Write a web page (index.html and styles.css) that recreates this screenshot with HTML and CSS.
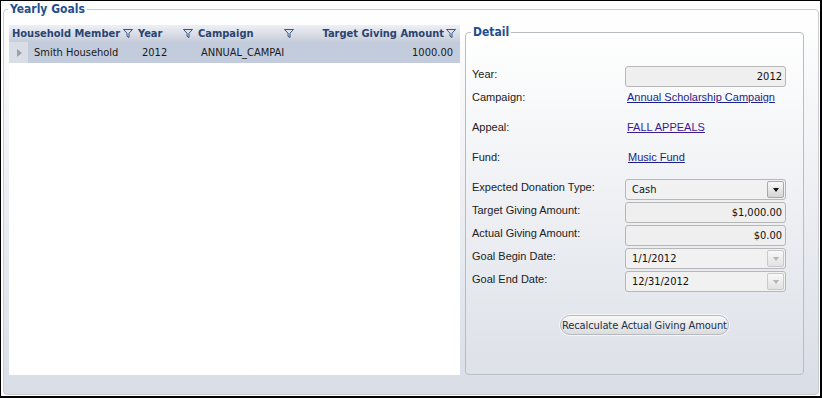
FILE: index.html
```html
<!DOCTYPE html>
<html lang="en">
<head>
    <meta charset="UTF-8">
    <title>Yearly Goals</title>
    <link rel="stylesheet" href="styles.css">
</head>
<body>

    <div class="frame">
        <fieldset class="goals">
            <legend>Yearly Goals</legend>
            <div class="goals-body">

                <div class="grid">
                    <div class="grid-head">
                        <div class="hcell first">Household Member
                            <svg class="filter" viewBox="0 0 10 9"><path d="M0.5 0.5H9.5L6 4.2V8.5L4 7.3V4.2Z"/></svg>
                        </div>
                        <div class="hcell">Year
                            <svg class="filter" viewBox="0 0 10 9"><path d="M0.5 0.5H9.5L6 4.2V8.5L4 7.3V4.2Z"/></svg>
                        </div>
                        <div class="hcell">Campaign
                            <svg class="filter" viewBox="0 0 10 9"><path d="M0.5 0.5H9.5L6 4.2V8.5L4 7.3V4.2Z"/></svg>
                        </div>
                        <div class="hcell last">Target Giving Amount
                            <svg class="filter" viewBox="0 0 10 9"><path d="M0.5 0.5H9.5L6 4.2V8.5L4 7.3V4.2Z"/></svg>
                        </div>
                    </div>
                    <div class="grid-row">
                        <div class="expander"><span class="tri"></span></div>
                        <div class="cell">Smith Household</div>
                        <div class="cell year">2012</div>
                        <div class="cell">ANNUAL_CAMPAI</div>
                        <div class="cell amount">1000.00</div>
                    </div>
                </div>

                <fieldset class="detail">
                    <legend>Detail</legend>

                    <div class="field">
                        <label>Year:</label>
                        <div class="box num">2012</div>
                    </div>
                    <div class="field tall">
                        <label>Campaign:</label>
                        <a href="#" class="link">Annual Scholarship Campaign</a>
                    </div>
                    <div class="field tall">
                        <label>Appeal:</label>
                        <a href="#" class="link visited">FALL APPEALS</a>
                    </div>
                    <div class="field tall">
                        <label>Fund:</label>
                        <a href="#" class="link fund">Music Fund</a>
                    </div>
                    <div class="field">
                        <label>Expected Donation Type:</label>
                        <div class="box combo">Cash<span class="drop"><span class="arrow"></span></span></div>
                    </div>
                    <div class="field">
                        <label>Target Giving Amount:</label>
                        <div class="box num">$1,000.00</div>
                    </div>
                    <div class="field">
                        <label>Actual Giving Amount:</label>
                        <div class="box num">$0.00</div>
                    </div>
                    <div class="field">
                        <label>Goal Begin Date:</label>
                        <div class="box combo">1/1/2012<span class="drop disabled"><span class="arrow"></span></span></div>
                    </div>
                    <div class="field">
                        <label>Goal End Date:</label>
                        <div class="box combo">12/31/2012<span class="drop disabled"><span class="arrow"></span></span></div>
                    </div>

                    <div class="actions">
                        <button class="btn">Recalculate Actual Giving Amount</button>
                    </div>
                </fieldset>

            </div>
        </fieldset>
    </div>

</body>
</html>
```

FILE: styles.css
```css
body {
    margin: 0;
    background-color: #fff;
    font-family: "DejaVu Sans Condensed", "DejaVu Sans", sans-serif;
    font-size: 11px;
    color: #1a1a1a;
}

.frame {
    width: 822px;
    height: 398px;
    box-sizing: border-box;
    border: 1px solid #000;
    border-right-width: 2px;
    border-bottom-width: 2px;
    padding-top: 1px;
}

/* outer group box */
.goals {
    margin: 0 1px 0 2px;
    padding: 8px 14px 19px 5px;
    min-width: 0;
    border: 1px solid #c9cbcf;
    border-radius: 4px;
    background: linear-gradient(to bottom, #ffffff, #d9dde6);
}

.goals > legend,
.detail > legend {
    margin-left: -1px;
    padding: 0 2px;
    font-weight: bold;
    font-size: 12px;
    color: #1f4e8e;
}

.goals > legend {
    line-height: 15px;
}

.goals-body {
    display: flex;
    gap: 5px;
    height: 350px;
}

/* grid */
.grid {
    width: 451px;
    flex: none;
    background-color: #fff;
}

.grid-head,
.grid-row {
    display: grid;
    grid-template-columns: 19px 107px 60px 101px 164px;
}

.grid-head {
    height: 17px;
    background: linear-gradient(to bottom, #eef0f5, #c6ccd9);
}

.hcell {
    display: flex;
    align-items: center;
    padding-left: 3px;
    font-weight: bold;
    line-height: 17px;
    color: #2a4471;
    white-space: nowrap;
}

.hcell.first {
    grid-column: span 2;
}

.hcell .filter {
    width: 10px;
    height: 9px;
    margin-left: auto;
    margin-right: 2px;
    flex: none;
}

.hcell.last {
    justify-content: flex-end;
    padding-right: 4px;
}

.hcell.last .filter {
    margin-left: 2px;
    margin-right: 0;
}

.filter path {
    fill: none;
    stroke: #35558a;
    stroke-width: 1;
}

.grid-row {
    height: 21px;
    line-height: 21px;
    background-color: #c3ccdc;
}

.expander {
    display: flex;
    align-items: center;
    padding-left: 8px;
    background-color: #d9dde6;
}

.tri {
    width: 0;
    height: 0;
    border-top: 4px solid transparent;
    border-bottom: 4px solid transparent;
    border-left: 5px solid #9aa1ac;
}

.cell {
    padding-left: 6px;
    white-space: nowrap;
    overflow: hidden;
}

.cell.year {
    padding-left: 7px;
}

.cell.amount {
    padding: 0 7px 0 0;
    text-align: right;
}

/* detail group box */
.detail {
    flex: 1;
    margin: 0;
    padding: 27px 17px 0 6px;
    min-width: 0;
    border: 1px solid #b8bcc3;
    border-radius: 4px;
    background: linear-gradient(to bottom, #ffffff, #dde1e8);
}

.detail > legend {
    line-height: 14px;
}

.field {
    display: grid;
    grid-template-columns: 153px 161px;
    height: 23px;
}

.field.tall {
    height: 30px;
}

.field label {
    padding-top: 2px;
    font-family: "Liberation Sans", Arial, sans-serif;
    font-size: 11px;
    color: #222;
}

.link {
    align-self: start;
    justify-self: start;
    padding-top: 2px;
    margin-left: 2px;
    font-family: "Liberation Sans", Arial, sans-serif;
    font-size: 11px;
    color: #1d1d8c;
}

.link.visited {
    color: #3b1b94;
}

.link.fund {
    margin-left: 3px;
}

.box {
    position: relative;
    height: 21px;
    box-sizing: border-box;
    border: 1px solid #b7b7b7;
    border-radius: 3px;
    background-color: #efefef;
    line-height: 19px;
    padding: 0 5px;
    color: #111;
}

.box.num {
    text-align: right;
    padding-right: 3px;
}

.box.combo {
    padding-left: 6px;
    background-color: #f1f1f1;
}

.drop {
    position: absolute;
    top: 1px;
    right: 1px;
    width: 17px;
    height: 17px;
    box-sizing: border-box;
    border: 1px solid #a9a9a9;
    border-radius: 2px;
    background: linear-gradient(to bottom, #fafafa, #d4d4d4);
    display: flex;
    align-items: center;
    justify-content: center;
}

.arrow {
    width: 0;
    height: 0;
    border-left: 3px solid transparent;
    border-right: 3px solid transparent;
    border-top: 4px solid #111;
}

.drop.disabled {
    border-color: #c9c9c9;
    background: linear-gradient(to bottom, #f8f8f8, #e2e2e2);
}

.drop.disabled .arrow {
    border-top-color: #b5b5b5;
}

.actions {
    margin-top: 21px;
    padding-left: 88px;
}

.btn {
    height: 20px;
    padding: 0 1px;
    border: 1px solid #b5bac4;
    border-radius: 10px;
    background: linear-gradient(to bottom, #f8f8f8, #dcdcdc);
    box-shadow: 0 0 0 1px #f4f5f8;
    font-family: "DejaVu Sans Condensed", "DejaVu Sans", sans-serif;
    font-size: 11px;
    letter-spacing: -0.1px;
    color: #22304c;
    cursor: pointer;
}
```
